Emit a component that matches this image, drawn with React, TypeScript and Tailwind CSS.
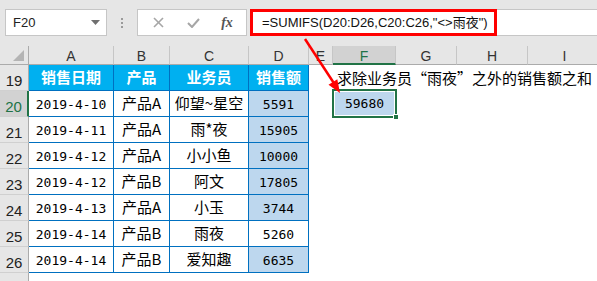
import React from "react";

const rows: [string, string, string, string, boolean][] = [
  ["2019-4-10", "产品A", "仰望~星空", "5591", true],
  ["2019-4-11", "产品A", "雨*夜", "15905", true],
  ["2019-4-12", "产品A", "小小鱼", "10000", true],
  ["2019-4-12", "产品B", "阿文", "17805", true],
  ["2019-4-13", "产品A", "小玉", "3744", true],
  ["2019-4-14", "产品B", "雨夜", "5260", false],
  ["2019-4-14", "产品B", "爱知趣", "6635", true],
];

const colLetters = ["A", "B", "C", "D", "E", "F", "G", "H", "I"];

function RowHeader({ n, active }: { n?: number; active?: boolean }) {
  return (
    <div
      className={
        "h-[26px] flex items-end justify-center pb-[2px] border-b border-[#d0d0d0] text-[15px] font-['Liberation_Sans',sans-serif] leading-none " +
        (active
          ? "bg-[#d2d2d2] border-r-2 border-r-[#217346] text-[#217346]"
          : "bg-[#e6e6e6] border-r border-r-[#ababab] text-[#222]")
      }
    >
      {n}
    </div>
  );
}

const tCell = "h-[26px] flex items-center justify-center border-r border-b border-[#0070c0]";
const mono = "font-['DejaVu_Sans_Mono',monospace] text-[13px] text-black pt-[2px]";
const cjk = "font-['Noto_Sans_CJK_SC',sans-serif] text-[15px] text-black";

export default function App() {
  return (
    <div className="relative w-[597px] h-[281px] overflow-hidden bg-white">
      {/* Toolbar */}
      <div className="h-[46px] bg-[#e6e6e6] flex items-start pt-[9px] pl-[5px]">
        <div className="w-[102px] h-[27px] bg-white border border-[#c6c6c6] flex items-center justify-between pl-[7px] pr-[6px]">
          <span className="font-['Liberation_Sans',sans-serif] text-[13px] text-[#222]">F20</span>
          <svg width="9" height="5" viewBox="0 0 9 5">
            <polygon points="0,0 9,0 4.5,5" fill="#6f6f6f" />
          </svg>
        </div>
        <div className="w-[30px] h-[27px] flex flex-col items-center justify-center gap-[2px]">
          <div className="w-[2px] h-[2px] bg-[#9a9a9a]" />
          <div className="w-[2px] h-[2px] bg-[#9a9a9a]" />
          <div className="w-[2px] h-[2px] bg-[#9a9a9a]" />
        </div>
        <div className="w-[110px] h-[27px] bg-white border border-[#c6c6c6] flex items-center">
          <div className="w-[40px] flex justify-center">
            <svg width="11" height="11" viewBox="0 0 11 11">
              <line x1="1" y1="1" x2="10" y2="10" stroke="#a6a6a6" strokeWidth="1.6" />
              <line x1="10" y1="1" x2="1" y2="10" stroke="#a6a6a6" strokeWidth="1.6" />
            </svg>
          </div>
          <div className="w-[30px] flex justify-center">
            <svg width="13" height="10" viewBox="0 0 13 10">
              <polyline points="1,5 5,9 12,1" fill="none" stroke="#a6a6a6" strokeWidth="2" />
            </svg>
          </div>
          <div className="w-[38px] flex justify-center">
            <span className="font-['Liberation_Serif',serif] italic font-bold text-[14px] text-[#555] leading-none">fx</span>
          </div>
        </div>
        <div className="ml-[3px] flex-1 h-[27px] bg-white border-y border-[#c6c6c6] flex">
          <div className="w-[247px] h-[27px] -mt-px border-[3px] border-[#ff0000] flex items-center pl-[9px]">
            <span className="font-['Liberation_Sans','Noto_Sans_CJK_SC',sans-serif] text-[13px] text-[#111] whitespace-nowrap">
              =SUMIFS(D20:D26,C20:C26,"&lt;&gt;雨夜")
            </span>
          </div>
        </div>
      </div>

      {/* Sheet */}
      <div className="grid grid-cols-[29px_85px_56px_79px_60px_24px_63px_61px_71px_74px]">
        {/* column header row */}
        <div className="h-[19px] bg-[#e6e6e6] border-r border-b border-[#ababab] flex items-end justify-end pr-[4px] pb-[3px]">
          <svg width="11" height="11" viewBox="0 0 11 11">
            <polygon points="11,0 11,11 0,11" fill="#b4b4b4" />
          </svg>
        </div>
        {colLetters.map((c) => (
          <div
            key={c}
            className={
              "h-[19px] flex items-center justify-center font-['Liberation_Sans',sans-serif] text-[14px] leading-none pt-[2px] border-r border-r-[#c6c6c6] " +
              (c === "F"
                ? "bg-[#d2d2d2] border-b-2 border-b-[#217346] text-[#217346]"
                : "bg-[#e6e6e6] border-b border-b-[#ababab] text-[#333]")
            }
          >
            {c}
          </div>
        ))}

        {/* row 19 */}
        <RowHeader n={19} />
        {["销售日期", "产品", "业务员", "销售额"].map((h) => (
          <div
            key={h}
            className={tCell + " bg-[#00b0f0] font-['Noto_Sans_CJK_SC',sans-serif] font-bold text-white text-[15px]"}
          >
            {h}
          </div>
        ))}
        <div className="h-[26px]" />
        <div className="h-[26px] relative z-10 flex items-center pl-[4px] overflow-visible">
          <span className="font-['Noto_Sans_CJK_SC',sans-serif] text-[15px] text-black whitespace-nowrap">
            求除业务员“雨夜”之外的销售额之和
          </span>
        </div>
        <div className="h-[26px]" />
        <div className="h-[26px]" />
        <div className="h-[26px]" />

        {/* data rows */}
        {rows.map((r, i) => (
          <React.Fragment key={i}>
            <RowHeader n={20 + i} active={i === 0} />
            <div className={tCell + " " + mono}>{r[0]}</div>
            <div className={tCell + " " + cjk}>{r[1]}</div>
            <div className={tCell + " " + cjk}>{r[2]}</div>
            <div className={tCell + " " + mono + (r[4] ? " bg-[#bdd7ee]" : " bg-white")}>{r[3]}</div>
            <div className="h-[26px]" />
            <div className="h-[26px] relative">
              {i === 0 && (
                <div className="absolute -top-[2px] -left-[1px] -right-[1px] -bottom-[1px] border-2 border-[#217346] z-20">
                  <div className="w-full h-full border border-white bg-[#bdd7ee] flex items-center justify-center font-['DejaVu_Sans_Mono',monospace] text-[13px] text-black pt-[1px]">
                    59680
                  </div>
                  <div className="absolute -right-[4px] -bottom-[4px] w-[6px] h-[6px] bg-[#217346] border border-white" />
                </div>
              )}
            </div>
            <div className="h-[26px]" />
            <div className="h-[26px]" />
            <div className="h-[26px]" />
          </React.Fragment>
        ))}
        <RowHeader />
      </div>

      {/* red arrow annotation */}
      <svg className="absolute top-0 left-0 pointer-events-none z-30" width="597" height="281" viewBox="0 0 597 281">
        <line x1="305" y1="39" x2="333.5" y2="82.5" stroke="#ff0000" strokeWidth="2.5" />
        <polygon points="340,93 328.5,84.8 337.3,79.2" fill="#ff0000" />
      </svg>
    </div>
  );
}
